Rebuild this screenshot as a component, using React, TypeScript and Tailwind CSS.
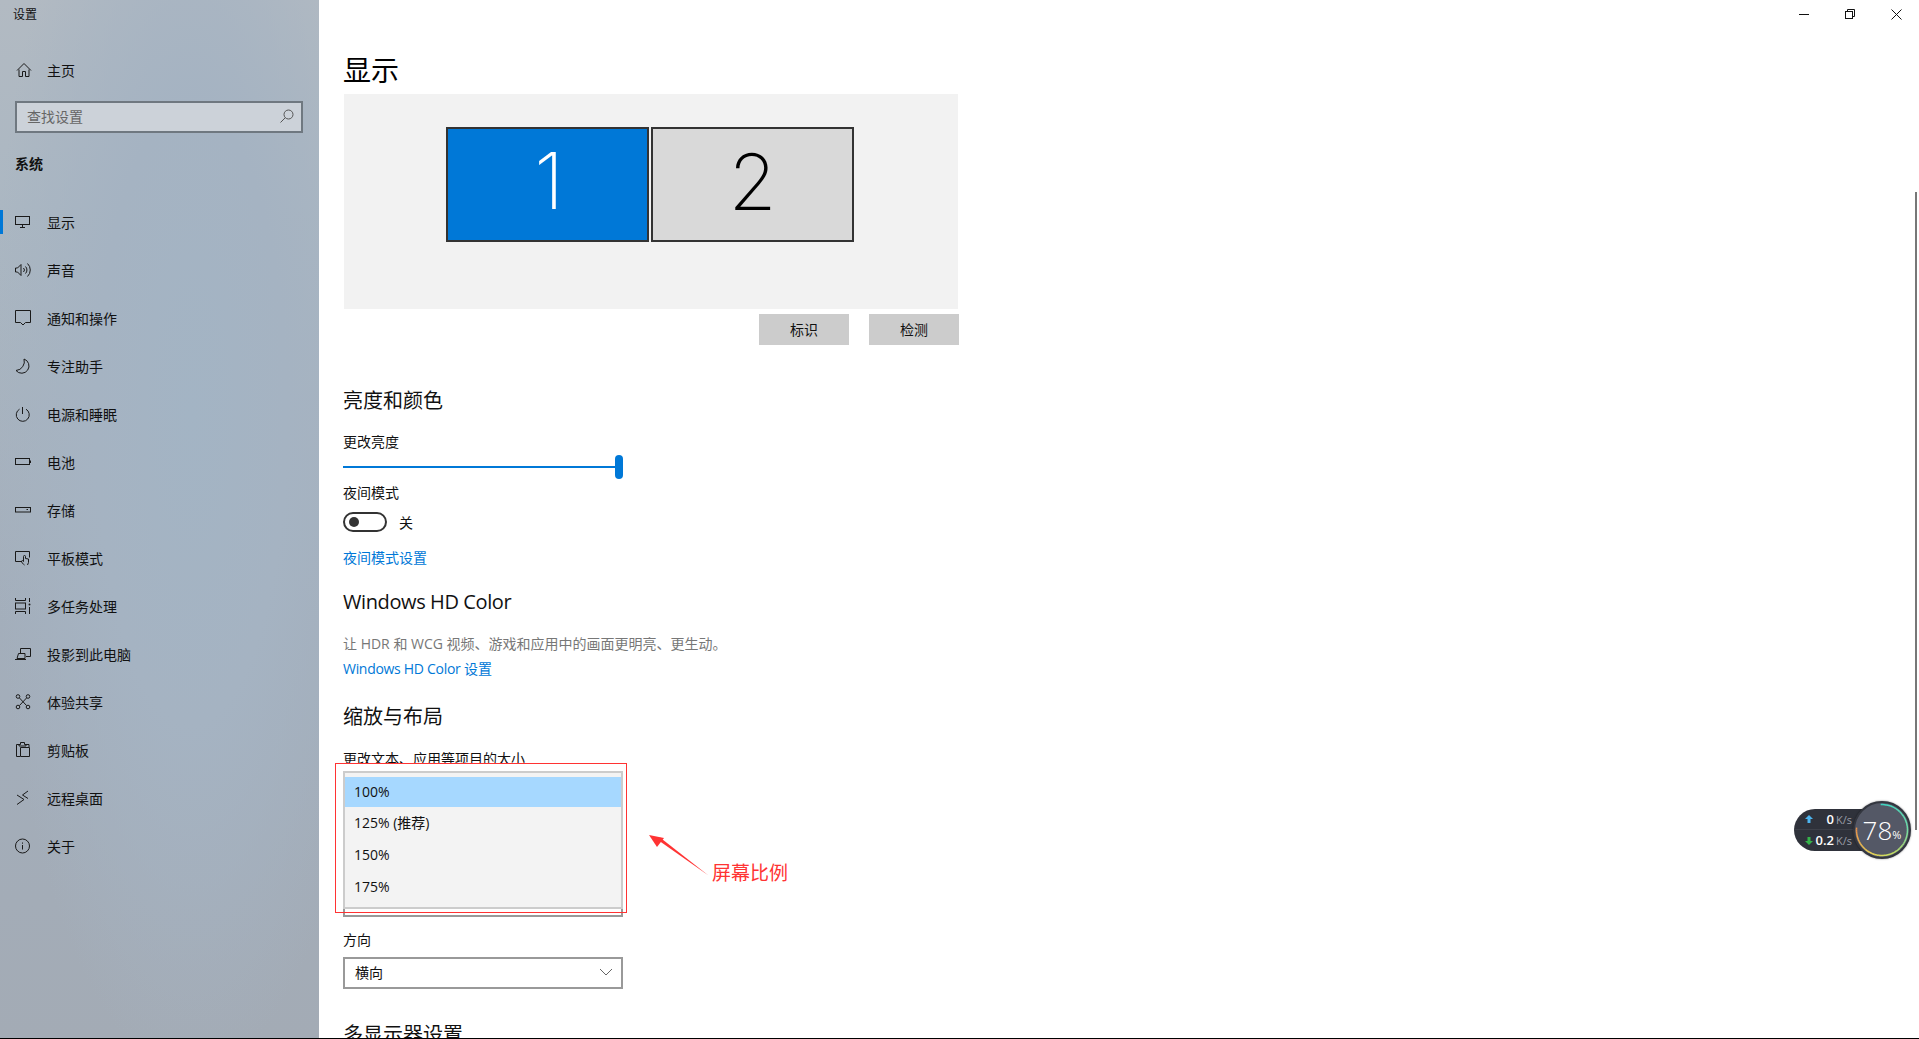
import React from "react";

const S = ({ children }: { children: React.ReactNode }) => (
  <svg width="16" height="16" viewBox="0 0 16 16" fill="none" stroke="#1a1a1a" strokeWidth="1" className="shrink-0">
    {children}
  </svg>
);

const icons: Record<string, React.ReactNode> = {
  display: <S><rect x="0.500" y="2.500" width="14" height="8" /><path d="M7.500 11v2.500M5 13.500h5" /></S>,
  sound: <S><path d="M0.500 6h2l3.500-3.500v11L2.500 10h-2z" /><path d="M8.500 6a2.800 2.800 0 0 1 0 4M10.500 4.500a5 5 0 0 1 0 7M12.500 1.500a9 9 0 0 1 0 13" /></S>,
  notify: <S><path d="M0.500 0.500h15v12h-5L8 15l-2.500-2.500h-5z" /></S>,
  moon: <S><path d="M9 1 A7.300 7.300 0 1 1 1 12.500 A9 9 0 0 0 9 1 Z" /></S>,
  power: <S><path d="M7.500 1v7" /><path d="M4.500 3.200a6.500 6.500 0 1 0 6.500 0" /></S>,
  battery: <S><rect x="0.500" y="4.500" width="14" height="6" /><path d="M15.500 6.500v2.500" /></S>,
  storage: <S><rect x="0.500" y="5.500" width="15" height="4.500" /><path d="M11.500 7.500h1.500" /></S>,
  tablet: <S><path d="M7 11.500H0.500v-10h14v6" /><path d="M9.500 15c-1.500-1-3-2.500-3-4l1-.5 1 1V6.500a1 1 0 0 1 2 0V8.500l3 .5v3.500l-1 2.500" /></S>,
  multi: <S><path d="M0.500 0v2.500h10V0M0.500 16v-2.500h10V16" /><rect x="0.500" y="5" width="10" height="6" /><path d="M14.500 0v4M14.500 9v7" /><circle cx="14.500" cy="6.500" r="1" fill="#1a1a1a" stroke="none" /></S>,
  project: <S><path d="M5.500 7V2.500h10v8H11" /><path d="M3.500 7.500h6.500v5h-8zM0 13.500h11" /></S>,
  share: <S><circle cx="3" cy="2.500" r="1.800" /><circle cx="13" cy="2.500" r="1.800" /><circle cx="3" cy="13" r="1.800" /><circle cx="13" cy="13" r="1.800" /><path d="M4.500 4l7 7.500M11.500 4l-7 7.500" /></S>,
  clip: <S><path d="M5 2.500H1.500v12H5" /><path d="M4 4V2.500h1.500V0.500h4v2H11V4zM5.500 5.500h9v9h-9z" /><path d="M11 2.500h3V5" /></S>,
  remote: <S><path d="M2 5l7 4.500-7 5" /><path d="M13 1L7.500 5l5.500 3.500" /></S>,
  info: <S><circle cx="7.500" cy="8" r="7" /><path d="M7.500 7v4.500M7.500 4.500v1.200" /></S>,
};

const nav: [string, string][] = [
  ["display", "显示"], ["sound", "声音"], ["notify", "通知和操作"], ["moon", "专注助手"], ["power", "电源和睡眠"],
  ["battery", "电池"], ["storage", "存储"], ["tablet", "平板模式"], ["multi", "多任务处理"], ["project", "投影到此电脑"],
  ["share", "体验共享"], ["clip", "剪贴板"], ["remote", "远程桌面"], ["info", "关于"],
];

function Gauge() {
  const cx = 29, cy = 29, r = 25.5;
  const n = 60;
  const stops: [number, [number, number, number]][] = [
    [0, [62, 214, 196]], [0.3, [110, 220, 170]], [0.55, [190, 222, 100]], [0.75, [235, 210, 85]], [1, [235, 140, 70]],
  ];
  const colorAt = (t: number) => {
    for (let i = 1; i < stops.length; i++) {
      if (t <= stops[i][0]) {
        const [a, ca] = stops[i - 1];
        const [b, cb] = stops[i];
        const k = (t - a) / (b - a);
        return `rgb(${ca.map((v, j) => Math.round(v + (cb[j] - v) * k)).join(",")})`;
      }
    }
    return "rgb(235,140,70)";
  };
  const start = -3, sweep = 278;
  const segs = [];
  for (let i = 0; i < n; i++) {
    const a0 = ((start + (sweep * i) / n - 90) * Math.PI) / 180;
    const a1 = ((start + (sweep * (i + 1.1)) / n - 90) * Math.PI) / 180;
    segs.push(
      <path
        key={i}
        d={`M${cx + r * Math.cos(a0)} ${cy + r * Math.sin(a0)}A${r} ${r} 0 0 1 ${cx + r * Math.cos(a1)} ${cy + r * Math.sin(a1)}`}
        stroke={colorAt(i / n)}
        strokeWidth="1.500"
        fill="none"
      />
    );
  }
  return (
    <svg width="58" height="58" viewBox="0 0 58 58" className="absolute left-[-2px] top-[-2px]">
      {segs}
    </svg>
  );
}

export default function App() {
  return (
    <div className="relative flex h-[1039px] w-full overflow-hidden border-b border-black bg-white font-['Open_Sans','Noto_Sans_CJK_SC',sans-serif] text-[14px] text-[#111]">
      <aside className="flex w-[319px] shrink-0 flex-col bg-[radial-gradient(ellipse_at_60%_40%,#a3b4c4_0%,#a5b3c2_35%,transparent_75%),linear-gradient(180deg,#b2bac2_0%,#abb7c2_20%,#a3aebb_60%,#a3abb5_100%)]">
        <div className="h-[28px] pl-[13px] pt-[6px] text-[12px] leading-[18px]">设置</div>
        <div className="mt-[18px] flex h-[48px] items-center">
          <svg width="16" height="16" viewBox="0 0 16 16" fill="none" stroke="#1a1a1a" className="ml-[16px] shrink-0">
            <path d="M1 8.500L8 1.500l7 7M3 7.500V14.500h3.500V9.500h3V14.500H13V7.500" />
          </svg>
          <span className="ml-[15px]">主页</span>
        </div>
        <div className="mt-[7px] ml-[15px] flex h-[32px] w-[288px] items-center justify-between border-2 border-[#6f7880] bg-[#ccd2d9] pb-[2px] pl-[10px] pr-[7px] text-[#666]">
          <span>查找设置</span>
          <svg width="14" height="14" viewBox="0 0 14 14" fill="none" stroke="#555">
            <circle cx="8.500" cy="5.500" r="4.500" />
            <path d="M5.300 8.700L0.500 13.500" />
          </svg>
        </div>
        <div className="mt-[21px] h-[20px] pl-[15px] font-bold leading-[20px]">系统</div>
        <nav className="mt-[24px] flex flex-col">
          {nav.map(([ic, label], i) => (
            <div key={label} className="relative flex h-[48px] items-center pl-[15px]">
              {i === 0 && <div className="absolute left-0 top-[12px] h-[24px] w-[3px] bg-[#0078d7]" />}
              {icons[ic]}
              <span className="ml-[16px]">{label}</span>
            </div>
          ))}
        </nav>
      </aside>

      <main className="relative min-w-0 flex-1 overflow-hidden pl-[24px]">
        <div className="flex flex-col [&>*]:shrink-0">
          <div className="mt-[50px] h-[40px] text-[28px] leading-[40px] text-black">显示</div>
          <div className="ml-px mt-[4px] flex h-[215px] w-[614px] bg-[#f2f2f2] pl-[102px] pt-[33px]">
            <div className="flex h-[115px] w-[203px] items-center justify-center border-2 border-[#333] bg-[#0078d7] pb-[8px] pl-[3px] font-['Inter',sans-serif] text-[78px] font-extralight leading-none text-white">1</div>
            <div className="ml-[2px] flex h-[115px] w-[203px] items-center justify-center border-2 border-[#333] bg-[#d9d9d9] pb-[5px] font-['Inter',sans-serif] text-[78px] font-extralight leading-none text-black">2</div>
          </div>
          <div className="mt-[5px] flex w-[616px] justify-end gap-[20px]">
            <button className="h-[31px] w-[90px] bg-[#ccc]">标识</button>
            <button className="h-[31px] w-[90px] bg-[#ccc]">检测</button>
          </div>

          <h2 className="mt-[42px] h-[28px] text-[20px] leading-[28px]">亮度和颜色</h2>
          <div className="mt-[17px] h-[20px] leading-[20px]">更改亮度</div>
          <div className="relative mt-[3px] flex h-[24px] w-[280px] items-center">
            <div className="h-[2px] w-full bg-[#0078d7]" />
            <div className="absolute right-0 top-0 h-[24px] w-[8px] rounded-full bg-[#0078d7]" />
          </div>
          <div className="mt-[4px] h-[20px] leading-[20px]">夜间模式</div>
          <div className="mt-[9px] flex h-[20px] items-center">
            <div className="flex h-[20px] w-[44px] items-center rounded-full border-2 border-[#333] pl-[4px]">
              <div className="h-[10px] w-[10px] rounded-full bg-[#333]" />
            </div>
            <span className="ml-[12px]">关</span>
          </div>
          <a className="mt-[16px] h-[20px] leading-[20px] text-[#0078d7]">夜间模式设置</a>

          <h2 className="mt-[20px] h-[28px] text-[20px] leading-[28px] tracking-[-0.4px]">Windows HD Color</h2>
          <p className="mt-[18px] h-[20px] leading-[20px] text-[#777]">让 HDR 和 WCG 视频、游戏和应用中的画面更明亮、更生动。</p>
          <a className="mt-[5px] h-[20px] leading-[20px] text-[#0078d7]"><span className="tracking-[-0.3px]">Windows HD Color</span> 设置</a>

          <h2 className="mt-[24px] h-[28px] text-[20px] leading-[28px]">缩放与布局</h2>
          <div className="mt-[18px] h-[20px] leading-[20px]">更改文本、应用等项目的大小</div>
          <div className="mt-[116px] h-[32px] w-[280px] border-2 border-[#999]" />
          <div className="mt-[13px] h-[20px] leading-[20px]">方向</div>
          <div className="mt-[7px] flex h-[32px] w-[280px] items-center justify-between border-2 border-[#999] pb-[2px] pl-[10px] pr-[8px]">
            <span>横向</span>
            <svg width="14" height="8" viewBox="0 0 14 8" fill="none" stroke="#666">
              <path d="M1 1l6 6 6-6" />
            </svg>
          </div>
          <h2 className="mt-[32px] h-[28px] text-[20px] leading-[28px]">多显示器设置</h2>
        </div>

        {/* dropdown popup */}
        <div className="absolute left-[24px] top-[771px] h-[138px] w-[280px] border-2 border-[#ccc] bg-[#f3f3f3] pt-[4px]">
          <div className="flex h-[30px] items-center bg-[#a6d8ff] pb-[2px] pl-[9px]">100%</div>
          <div className="flex h-[32px] items-center pb-[2px] pl-[9px]">125% (推荐)</div>
          <div className="flex h-[32px] items-center pb-[2px] pl-[9px]">150%</div>
          <div className="flex h-[32px] items-center pb-[2px] pl-[9px]">175%</div>
        </div>

        {/* annotation */}
        <div className="absolute left-[16px] top-[763px] h-[150px] w-[292px] border border-[#f33]">
          <div className="h-[7px] w-full bg-white" />
        </div>
        <svg width="64" height="46" viewBox="0 0 64 46" className="absolute left-[329px] top-[833px]">
          <path d="M60.500 42.500L10 7 12 4.500z" fill="#f33" />
          <path d="M1 2l15 3-7 9z" fill="#f33" />
        </svg>
        <div className="absolute left-[393px] top-[860px] h-[26px] text-[19px] leading-[26px] text-[#f33]">屏幕比例</div>

        {/* window controls */}
        <svg width="10" height="1" className="absolute left-[1480px] top-[14px]"><rect width="10" height="1" fill="#111" /></svg>
        <svg width="10" height="10" viewBox="0 0 10 10" fill="none" stroke="#111" className="absolute left-[1526px] top-[9px]">
          <rect x="0.500" y="2.500" width="7" height="7" />
          <path d="M2.500 2.500V0.500h7v7H7.500" />
        </svg>
        <svg width="11" height="11" viewBox="0 0 11 11" fill="none" stroke="#111" className="absolute left-[1572px] top-[9px]">
          <path d="M0.500 0.500l10 10M10.500 0.500l-10 10" />
        </svg>

        {/* scrollbar */}
        <div className="absolute right-[2px] top-[192px] h-[638px] w-[2px] bg-[#777]" />

        {/* floating net-speed widget */}
        <div className="absolute left-[1475px] top-[809px] flex h-[42px] w-[75px] flex-col rounded-l-[21px] bg-[#2f323b] text-white">
          <div className="flex h-[21px] items-center border-b border-[#3d4049] pl-[11px]">
            <svg width="8" height="8" viewBox="0 0 8 8" className="shrink-0"><path d="M4 0l4 4H5.500v4h-3V4H0z" fill="#4db4ef" /></svg>
            <span className="ml-[1px] w-[20px] text-right text-[13px] font-semibold leading-none">0</span>
            <span className="ml-[2px] text-[11px] leading-none text-[#9a9ea8]">K/s</span>
          </div>
          <div className="flex h-[21px] items-center pl-[11px]">
            <svg width="8" height="8" viewBox="0 0 8 8" className="shrink-0"><path d="M4 8l4-4H5.500V0h-3v4H0z" fill="#35b34a" /></svg>
            <span className="ml-[1px] w-[20px] text-right text-[13px] font-semibold leading-none">0.2</span>
            <span className="ml-[2px] text-[11px] leading-none text-[#9a9ea8]">K/s</span>
          </div>
        </div>
        <div className="absolute left-[1534px] top-[801px] flex h-[58px] w-[58px] items-center justify-center rounded-full border-2 border-[#33363f] bg-[#545866] text-white shadow-[0_0_2px_rgba(0,0,0,0.5)]">
          <Gauge />
          <span className="text-[26px] font-light leading-none">78</span>
          <span className="mt-[8px] text-[11px] leading-none">%</span>
        </div>
      </main>
    </div>
  );
}
